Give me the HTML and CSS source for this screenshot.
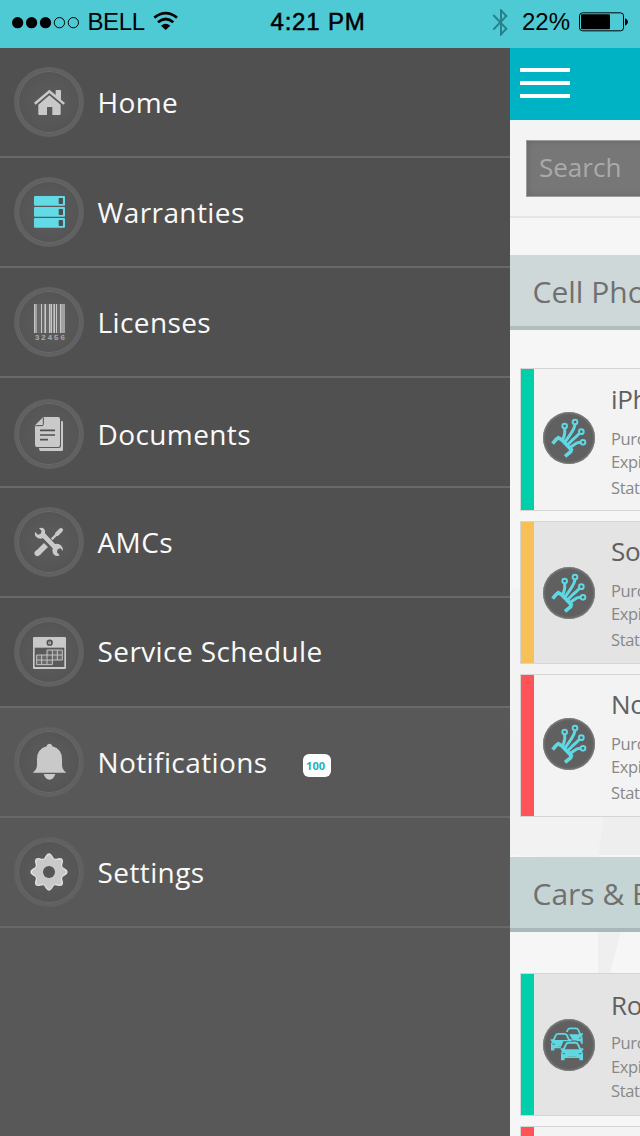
FILE: index.html
```html
<!DOCTYPE html>
<html lang="en">
<head>
<meta charset="utf-8">
<title>Menu</title>
<link rel="stylesheet" href="styles.css">
</head>
<body>
<div class="screen">
  <header class="status">
    <div class="status-left">
      <svg class="signal" viewBox="36 45 202 39" aria-hidden="true">
        <circle cx="53" cy="65" r="17"/><circle cx="95" cy="65" r="17"/><circle cx="137" cy="65" r="17"/>
        <g fill="none" stroke="#000" stroke-width="3"><circle cx="179" cy="65" r="15.500"/><circle cx="221" cy="65" r="15.500"/></g>
      </svg>
      <span class="carrier">BELL</span>
      <svg class="wifi" viewBox="459 33 75 60" aria-hidden="true">
        <g fill="none" stroke="#000" stroke-width="8"><path d="M463 53Q497 26 531 53"/><path d="M474 67Q497 47 520 67"/></g>
        <path d="M483 77Q497 65 511 77L497 90z"/>
      </svg>
    </div>
    <div class="clock">4:21 PM</div>
    <div class="status-right">
      <svg class="bluetooth" viewBox="516 24 48 81" aria-hidden="true"><path d="M520 42L559 83L543 100V28L559 45L520 86" fill="none" stroke="#27808a" stroke-width="6"/></svg>
      <span class="percent">22%</span>
      <svg class="battery" viewBox="777 35 150 60" aria-hidden="true">
        <rect x="778.500" y="37.500" width="132" height="54" rx="9" fill="none" stroke="#000" stroke-width="3"/>
        <rect x="783" y="42" width="87" height="45" rx="3"/><path d="M915 54Q924 58 924 65Q924 72 915 76z"/>
      </svg>
    </div>
  </header>
  <div class="body">
    <nav class="menu">
      <a class="item">
        <span class="disc"><svg viewBox="42 51 210 210"><g fill="#c9c9c9"><path d="M148 119L167 135V121Q167 120 169 120H181Q183 120 183 122V149L195 159L190 164L148 129L107 164L102 158Z"/><path d="M148 136L182 164V192Q182 195 179 195H157V171H141V195H118Q115 195 115 192V164Z"/></g></svg></span>
        <span class="label">Home</span>
      </a>
      <a class="item">
        <span class="disc"><svg viewBox="42 381 210 210"><g fill="#62dbe6"><rect x="102" y="438" width="93" height="29" rx="3"/><rect x="102" y="471" width="93" height="29" rx="3"/><rect x="102" y="504" width="93" height="29" rx="3"/></g><g fill="#505050"><rect x="176" y="444" width="13" height="18" rx="2"/><rect x="176" y="477" width="13" height="18" rx="2"/><rect x="176" y="510" width="13" height="18" rx="2"/></g></svg></span>
        <span class="label">Warranties</span>
      </a>
      <a class="item">
        <span class="disc"><svg viewBox="42 51 210 210"><rect x="102" y="102" width="93" height="87" fill="#6a6a6a"/><g fill="#c6c6c6"><path d="M102 102h3v87h-3zM123 102h3v87h-3zM135 102h3v87h-3zM147 102h3v87h-3zM153 102h3v87h-3zM162 102h3v87h-3zM168 102h3v87h-3zM180 102h3v87h-3z"/><path opacity=".6" d="M105 102h6v87h-6zM132 102h3v87h-3zM150 102h3v87h-3zM159 102h3v87h-3zM183 102h12v87h-12z"/></g><text class="barcode-no" x="104" y="209" textLength="91" lengthAdjust="spacing">32456</text></svg></span>
        <span class="label">Licenses</span>
      </a>
      <a class="item item-low">
        <span class="disc"><svg viewBox="42 387 210 210"><path d="M184 453Q189 453 189 457V539Q189 543 185 543H121Q117 543 117 534H176Q183 534 183 527V453z" fill="#c9c9c9"/><path d="M130 441H174Q180 441 180 447V525Q180 531 174 531H111Q105 531 105 525V466z" fill="#c9c9c9"/><path d="M106 467H126Q130 467 130 463V442" fill="none" stroke="#505050" stroke-width="3"/><path d="M120 481H165M120 495H165M120 509H144" stroke="#505050" stroke-width="5"/></svg></span>
        <span class="label">Documents</span>
      </a>
      <a class="item">
        <span class="disc"><svg viewBox="42 51 210 210"><g fill="none" stroke="#c9c9c9" stroke-linecap="round"><path d="M113 190L138 165" stroke-width="17" stroke-linecap="butt"/><path d="M112 190L114 188" stroke-width="17"/><path d="M155 148L172 131" stroke-width="7" stroke-linecap="butt"/><path d="M171 132L183 120" stroke-width="12"/></g><g stroke="#555" stroke-width="3" paint-order="stroke" fill="#c9c9c9"><path d="M117 115Q127 111 133 118Q137 123 135 130L165 162Q177 159 184 167Q190 173 189 183L181 175L173 178L171 187L179 196Q170 201 162 194Q155 187 158 175L129 145Q116 149 108 140Q103 134 105 125L114 134L122 131L125 123z"/></g></svg></span>
        <span class="label">AMCs</span>
      </a>
      <a class="item">
        <span class="disc"><svg viewBox="42 381 210 210"><rect x="99" y="441" width="99" height="96" rx="4" fill="#c9c9c9"/><rect x="104" y="473" width="89" height="58" fill="#5a5a5a"/><circle cx="149" cy="458" r="7" fill="none" stroke="#505050" stroke-width="5"/><circle cx="149" cy="458" r="2" fill="#505050"/><g fill="#6a6a6a" stroke="#c3c3c3" stroke-width="3"><path d="M141 480H187V510H157V524H110V495H141zM110 510H157V495H187M125 495V524M141 495V524M141 495H157V480M172 480V510"/></g></svg></span>
        <span class="label high">Service Schedule</span>
      </a>
      <a class="item item-light">
        <span class="disc"><svg viewBox="42 51 210 210"><path fill="#c9c9c9" d="M149 101Q156 101 157 109Q186 117 186 148V166Q186 179 199 188H98Q111 179 111 166V148Q111 117 140 109Q141 101 149 101zM131 192H166Q161 209 149 209Q136 209 131 192z"/></svg></span>
        <span class="label">Notifications</span><span class="badge">100</span>
      </a>
      <a class="item item-light">
        <span class="disc"><svg viewBox="42 381 210 210"><defs><path id="tooth" d="M-18 -36Q-11 -40 -8 -48Q0 -60 8 -48Q11 -40 18 -36L12 -26H-12z"/></defs><g transform="translate(147 486)"><g fill="#c9c9c9" stroke="#e3e3e3" stroke-width="4"><use href="#tooth"/><use href="#tooth" transform="rotate(45)"/><use href="#tooth" transform="rotate(90)"/><use href="#tooth" transform="rotate(135)"/><use href="#tooth" transform="rotate(180)"/><use href="#tooth" transform="rotate(225)"/><use href="#tooth" transform="rotate(270)"/><use href="#tooth" transform="rotate(315)"/></g><circle r="41" fill="#c9c9c9"/><circle r="18" fill="#555"/></g></svg></span>
        <span class="label">Settings</span>
      </a>
    </nav>
    <main class="page">
      <svg class="facets" viewBox="0 0 130 1016" aria-hidden="true"><path d="M0 470L130 440V640L96 680L0 610z" fill="#f3f3f3"/><path d="M0 610L96 680L88 740L0 735z" fill="#f2f2f2"/><path d="M96 680L130 640V735H88z" fill="#eeeeee"/><path d="M88 800H114L98 860L88 900z" fill="#efefef"/></svg>
      <div class="topbar"><div class="burger"><i></i><i></i><i></i></div></div>
      <div class="searchbar"><div class="search">Search</div></div>
      <h2 class="section">Cell Phones</h2>
      <div class="cards">
        <article class="card green">
          <svg class="thumb" viewBox="130 36 156 156"><g id="hand" fill="none" stroke="#5fd8e3" stroke-width="9"><path d="M159 131L169 119L176 113L187 120L215 149L213 155L196 169" stroke-width="11"/><path d="M188 121Q197 105 195 86M195 128L216 97Q224 85 226 74M202 136L218 120Q233 108 239 100M209 144L222 135Q232 127 242 127"/><g fill="#606060" stroke-width="6"><circle cx="195" cy="78" r="7"/><circle cx="226" cy="66" r="7"/><circle cx="245" cy="95" r="7"/><circle cx="250" cy="127" r="7"/></g></g></svg>
          <div class="info"><h3>iPhone</h3><p>Purchased</p><p>Expires</p><p class="last">Status</p></div>
        </article>
        <article class="card amber alt up">
          <svg class="thumb low" viewBox="130 36 156 156"><use href="#hand"/></svg>
          <div class="info"><h3>Sony</h3><p>Purchased</p><p>Expires</p><p class="last">Status</p></div>
        </article>
        <article class="card red up">
          <svg class="thumb" viewBox="130 36 156 156"><use href="#hand"/></svg>
          <div class="info"><h3>Nokia</h3><p>Purchased</p><p>Expires</p><p class="last">Status</p></div>
        </article>
      </div>
      <h2 class="section second">Cars &amp; Bikes</h2>
      <div class="cards">
        <article class="card green alt even">
          <svg class="thumb low" viewBox="130 117 156 156"><defs><g id="car"><path d="M-25 -5L-18 -21Q-16 -26 -9 -26H9Q16 -26 18 -21L25 -5" fill="none" stroke="#5fd8e3" stroke-width="6"/><path d="M-34 -9H-26L-23 -6H23L26 -9H34V-5L30 -1Q33 3 33 8V27H22V20H-22V27H-33V8Q-33 3 -30 -1L-34 -5z" fill="#5fd8e3"/><path d="M-28 4L-20 7V9L-28 8zM28 4L20 7V9L28 8zM-13 14H13V15H-13z" fill="#606060"/></g></defs><use href="#car" transform="translate(220 168) scale(.88)"/><path d="M154 184L166 156H204L219 180V212H154z" fill="#606060"/><use href="#car" transform="translate(185 186) scale(.94)"/><path d="M183 205L191 184H242L250 205V242H183z" fill="#606060"/><use href="#car" transform="translate(217 214)"/></svg>
          <div class="info"><h3>Royal</h3><p>Purchased</p><p>Expires</p><p class="last">Status</p></div>
        </article>
        <article class="card red"></article>
      </div>
    </main>
  </div>
</div>
</body>
</html>
```
FILE: styles.css
```css
* { box-sizing: border-box; }
body { margin: 0; font-family: "Open Sans", "Noto Sans", sans-serif; }
.screen { width: 640px; height: 1136px; overflow: hidden; display: flex; flex-direction: column; }
.status { height: 48px; flex: none; background: #4ecad5; display: grid; grid-template-columns: 258px 120px 262px; align-items: start; font: 24px/44px "Liberation Sans", Arial, sans-serif; color: #000; }
.status-left, .status-right { display: flex; align-items: center; height: 44px; }
.status-left { padding-left: 12px; }
.status-right { padding-left: 114px; }
.signal { width: 67px; height: 13px; }
.carrier { width: 57px; margin-left: 8.500px; letter-spacing: -.4px; }
.wifi { width: 25px; height: 20px; margin-left: 8.500px; margin-top: -2px; }
.clock { text-align: center; height: 44px; white-space: nowrap; letter-spacing: .8px; -webkit-text-stroke: .5px #000; }
.bluetooth { width: 16px; height: 27px; }
.percent { width: 49px; margin-left: 14px; }
.battery { width: 50px; height: 20px; margin-left: 8px; }

.body { flex: 1; min-height: 0; display: flex; }
.menu { width: 510px; flex: none; background: #585858; }
.item { height: 110px; display: flex; align-items: center; padding-left: 14px; background: #505050; border-bottom: 2px solid #696969; color: #fafafa; }
.item-light { background: #585858; }
.item-low { padding-top: 4px; }
.disc { width: 70px; height: 70px; border-radius: 50%; border: 4px solid #616161; background: radial-gradient(circle, #595959 35%, #515151 100%); box-shadow: inset 0 0 0 1px #6b6b6b; flex: none; }
.disc svg { display: block; width: 70px; height: 70px; margin: -4px; }
.barcode-no { font: bold 24px "Liberation Mono", monospace; fill: #aaa; }
.label { margin-left: 13.500px; font-size: 28px; line-height: 38px; letter-spacing: .4px; white-space: nowrap; }
.high { padding-bottom: 2px; }
.badge { width: 28px; height: 23px; margin: 7px 0 0 35px; border-radius: 6px; background: #fff; color: #1db1c1; font-size: 11px; font-weight: 700; line-height: 24px; padding-right: 2px; text-align: center; }

.page { width: 130px; background: #f6f6f6; overflow: hidden; position: relative; }
.facets { position: absolute; top: 72px; left: 0; width: 130px; height: 1016px; }
.topbar, .searchbar, .section, .cards { position: relative; }
.topbar { height: 72px; background: #00b3c4; padding: 20px 0 0 10px; }
.burger { display: flex; flex-direction: column; gap: 9px; width: 50px; }
.burger i { height: 4px; background: #fff; }
.searchbar { height: 98px; background: #f4f4f4; border-bottom: 2px solid #e6e6e6; padding: 20px 0 0 16px; }
.search { width: 300px; height: 57px; border: 1px solid #9c9c9c; background: #777; box-shadow: inset 0 0 6px #666; padding-left: 12px; font-size: 26px; line-height: 52px; color: #aaa; }
.section { margin: 37px 0 0; height: 75px; padding-left: 22.500px; background: #ced8d8; border-bottom: 4px solid #b1bebe; font-size: 30px; font-weight: 400; line-height: 73px; color: #707070; white-space: nowrap; width: 400px; }
.second { margin-top: 40px; background: #c5d4d4; border-color: #a8b7b7; }
.cards { padding: 38px 0 0 10px; display: flex; flex-direction: column; gap: 10px; width: 400px; }
.second + .cards { padding-top: 41px; }
.card { height: 143px; border: 1px solid #d5d5d5; background: #f3f3f3; display: flex; }
.card::before { content: ""; width: 13px; flex: none; }
.alt { background: #e4e4e4; }
.green::before { background: #00cfa9; }
.amber::before { background: #f6c158; }
.red::before { background: #ff5457; }
.thumb { flex: none; width: 52px; height: 52px; margin: 43px 0 0 9px; border-radius: 50%; background: #606060; box-shadow: inset 0 0 2px 1px #858585; }
.low { margin-top: 45px; }
.info { margin-left: 16px; padding-top: 12px; color: #888; white-space: nowrap; }
.info h3 { margin: 0; font-size: 26px; line-height: 36px; font-weight: 400; color: #606060; letter-spacing: -.3px; }
.info p { margin: 0; font-size: 16.500px; line-height: 23px; letter-spacing: -.35px; }
.info h3 + p { margin-top: 10px; }
.info .last { margin-top: 3px; }
.up .info { padding-top: 11px; }
.even .info { padding-top: 13px; }
.even h3 + p { margin-top: 8px; }
.even p { line-height: 24px; }
.even .info .last { margin-top: 0; }
```
